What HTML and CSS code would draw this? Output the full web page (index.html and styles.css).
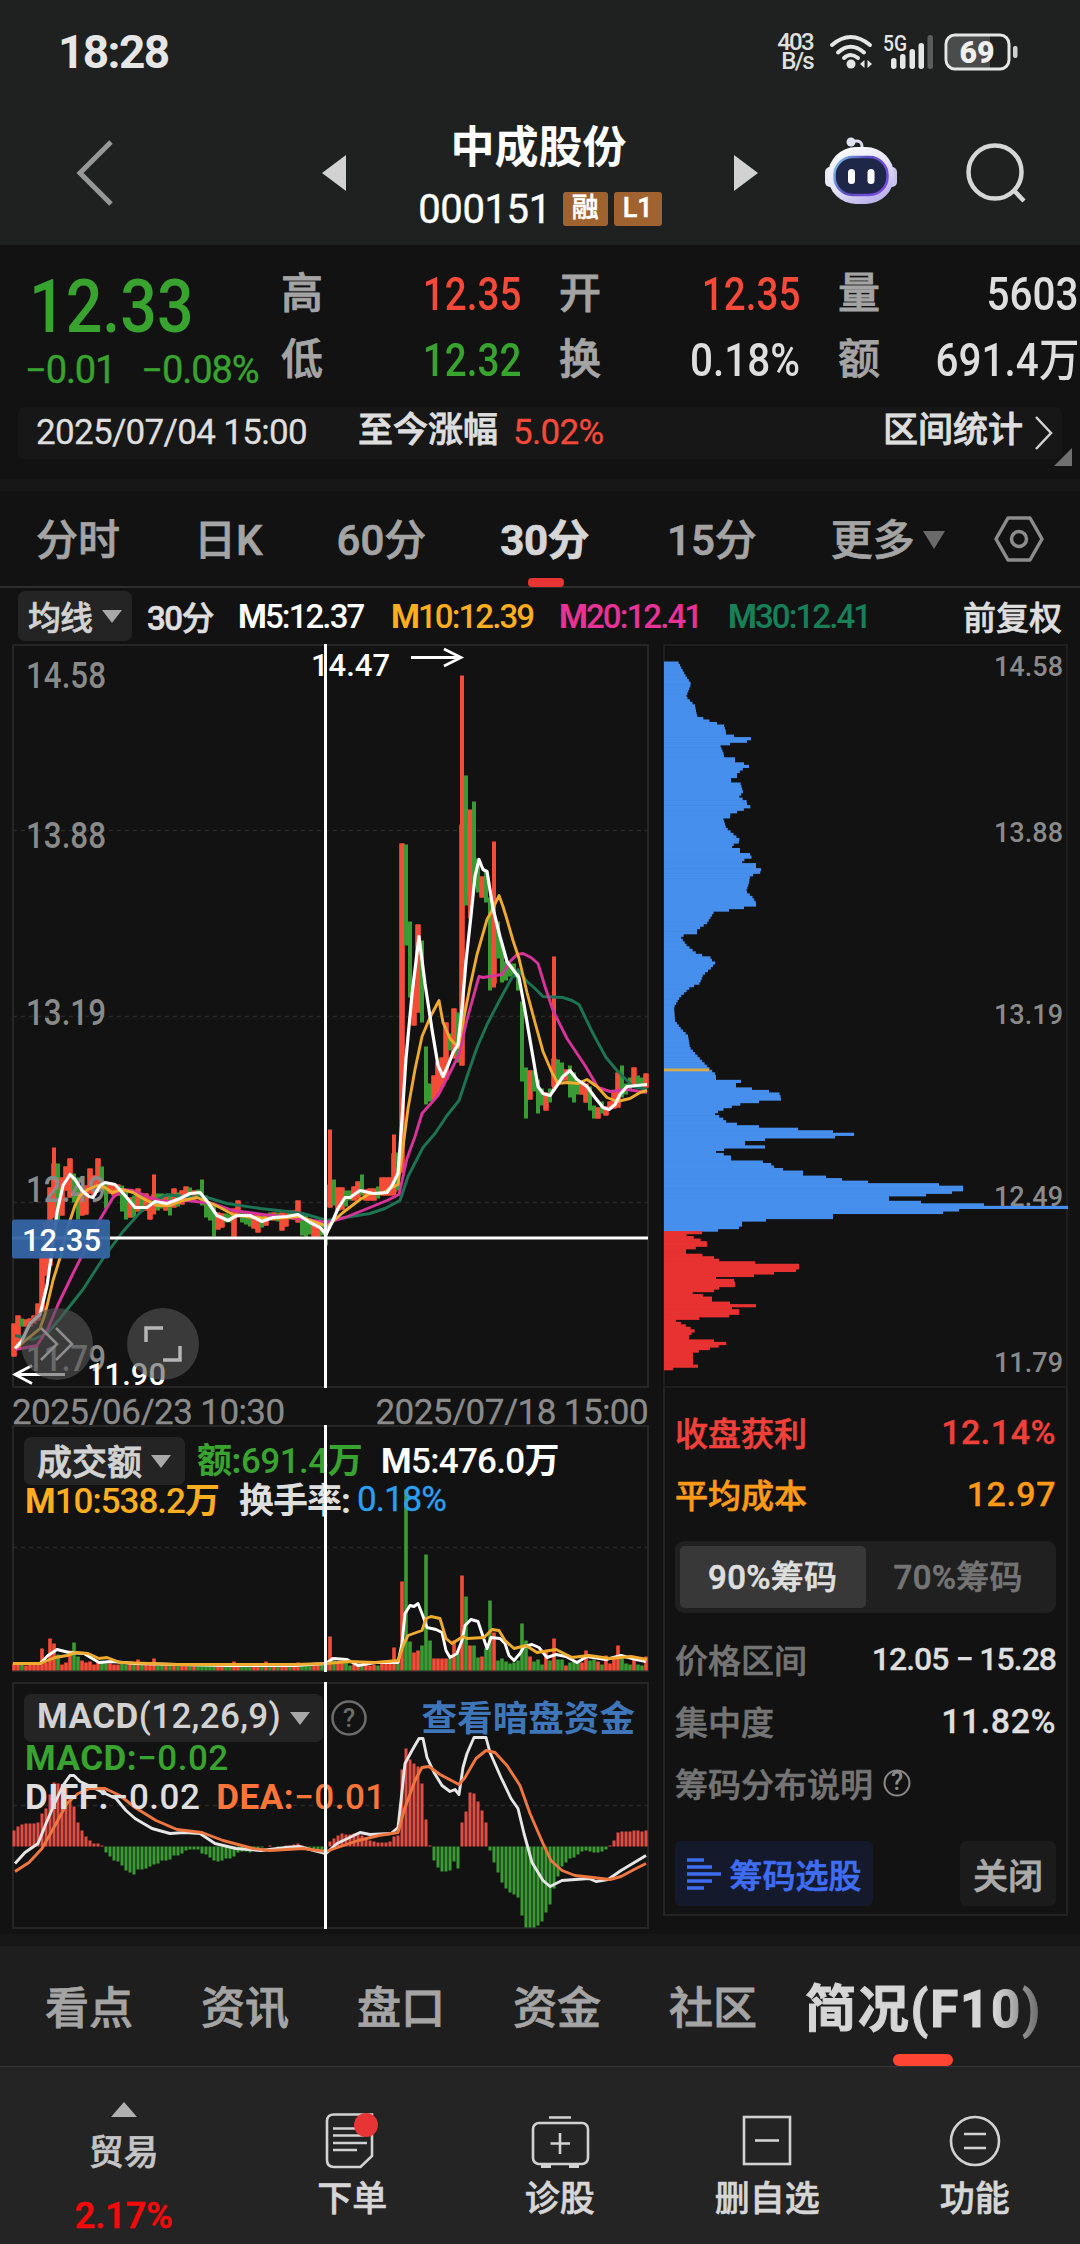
FILE: index.html
```
<!DOCTYPE html>
<html lang="zh-CN">
<head>
	<title>中成股份 000151</title>
	<meta http-equiv="content-type" content="text/html;charset=utf-8" />
	<link rel="stylesheet" href="styles.css">
</head>
<body>
	<div class="top">
		<div class="status">
			<span class="clock">18:28</span>
			<div class="status-right">
				<div class="speed"><p>403</p><p>B/s</p></div>
				<svg class="wifi" width="46" height="36" viewBox="0 0 46 36" fill="none" stroke="#e6e6e6" stroke-width="4" stroke-linecap="round">
					<path d="M3 11Q21.500 -5 41 11M9 18.500Q21.500 7 35 18.500M15 24Q21.500 18 29 24"/>
					<circle cx="22" cy="30" r="4.500" fill="#e6e6e6" stroke="none"/>
					<path d="M35.500 26v8l-4.500-4zM38.500 26v8l4.500-4z" fill="#e6e6e6" stroke="none"/>
				</svg>
				<svg class="signal" width="54" height="36" viewBox="0 0 54 36">
					<text x="0" y="17" class="sig-text" textLength="24" lengthAdjust="spacingAndGlyphs">5G</text>
					<g fill="#e6e6e6"><rect x="8" y="24" width="5.500" height="11" rx="2.700"/><rect x="17" y="20" width="5.500" height="15" rx="2.700"/><rect x="26.500" y="15" width="5.500" height="20" rx="2.700"/><rect x="35.500" y="9" width="5.500" height="26" rx="2.700"/></g>
					<rect x="44.500" y="1" width="5.500" height="34" rx="2.700" fill="#5c5c5c"/>
				</svg>
				<svg class="battery" width="76" height="38" viewBox="0 0 76 38">
					<path d="M12 3H46V35H12Q4 35 4 27V11Q4 3 12 3Z" fill="#4a4b4b"/>
					<rect x="2" y="2" width="63" height="34" rx="9" fill="none" stroke="#e6e6e6" stroke-width="3"/>
					<rect x="69" y="13" width="4.500" height="12" rx="2" fill="#cfcfcf"/>
					<text x="33" y="29.500" class="bat-text" text-anchor="middle" textLength="35" lengthAdjust="spacingAndGlyphs">69</text>
				</svg>
			</div>
		</div>
		<div class="nav">
			<svg width="40" height="66" viewBox="0 0 40 66" fill="none" stroke="#979797" stroke-width="5"><path d="M36 2L5 33L36 64"/></svg>
			<svg class="prev" width="24" height="36" viewBox="0 0 24 36"><path d="M24 0V36L0 18z" fill="#d2d2d2"/></svg>
			<div class="stock">
				<h1>中成股份</h1>
				<div class="code"><span class="code-num">000151</span><b class="tag">融</b><b class="tag">L1</b></div>
			</div>
			<svg class="next" width="24" height="36" viewBox="0 0 24 36"><path d="M0 0V36L24 18z" fill="#d2d2d2"/></svg>
			<svg class="robot" width="74" height="68" viewBox="0 0 74 68">
				<defs>
					<linearGradient id="head" x1="0" y1="0" x2=".6" y2="1"><stop offset="0" stop-color="#fff"/><stop offset=".6" stop-color="#e6e3f6"/><stop offset="1" stop-color="#bdb4ec"/></linearGradient>
					<linearGradient id="rim" x1="0" y1="0" x2="1" y2=".4"><stop offset="0" stop-color="#7fd0ee"/><stop offset=".5" stop-color="#5a4fc0"/><stop offset="1" stop-color="#7a4be0"/></linearGradient>
				</defs>
				<path d="M27 5Q39 1 38 12" fill="none" stroke="#dcdaf0" stroke-width="3"/>
				<circle cx="27" cy="5" r="4.500" fill="#dfe0f2"/>
				<rect x="1" y="30" width="12" height="20" rx="5" fill="#e8e7f6"/><rect x="61" y="30" width="12" height="20" rx="5" fill="#c9c3ee"/>
				<rect x="4" y="10" width="66" height="57" rx="28" fill="url(#head)"/>
				<rect x="10.500" y="20" width="53" height="38" rx="18" fill="#1e2748" stroke="url(#rim)" stroke-width="2.500"/>
				<rect x="24" y="32" width="7" height="15" rx="3.500" fill="#fff"/><rect x="43.500" y="32" width="7" height="15" rx="3.500" fill="#fff"/>
			</svg>
			<svg class="search" width="62" height="62" viewBox="0 0 62 62" fill="none" stroke="#d6d6d6" stroke-width="4.500"><circle cx="30" cy="30" r="26.500"/><path d="M48.500 48L59 59"/></svg>
		</div>
	</div>

	<div class="quote">
		<div class="price">
			<div class="now"><span>12.33</span></div>
			<div class="delta"><span>−0.01</span><span>−0.08%</span></div>
		</div>
		<div class="stats">
			<div class="stat"><label>高</label><span class="red">12.35</span></div>
			<div class="stat"><label>开</label><span class="red">12.35</span></div>
			<div class="stat"><label>量</label><span class="wide">5603</span></div>
			<div class="stat"><label>低</label><span class="green">12.32</span></div>
			<div class="stat"><label>换</label><span class="wide">0.18%</span></div>
			<div class="stat"><label>额</label><span class="wide">691.4万</span></div>
		</div>
	</div>
	<div class="strip">
		<span class="strip-date">2025/07/04 15:00</span>
		<span class="strip-label">至今涨幅</span>
		<span class="strip-pct red">5.02%</span>
		<span class="strip-more">区间统计</span>
		<svg width="20" height="36" viewBox="0 0 20 36" fill="none" stroke="#d2d2d2" stroke-width="2.500"><path d="M2 2L17 18L2 34"/></svg>
		<i class="corner"></i>
	</div>

	<div class="band"></div>
	<div class="tabs">
		<a>分时</a><a>日K</a><a>60分</a><a class="on">30分</a><a>15分</a><a>更多<i class="tri"></i></a>
		<svg width="50" height="46" viewBox="0 0 50 46" fill="none" stroke="#8c8c8c" stroke-width="3.500"><path d="M14 2H36L48 23L36 44H14L2 23z" stroke-linejoin="round"/><circle cx="25" cy="23" r="7.500"/></svg>
	</div>
	<div class="ma">
		<span class="pick">均线<i class="tri"></i></span>
		<span class="ma0">30分</span>
		<span class="ma5"><b>M</b>5:12.37</span>
		<span class="ma10"><b>M</b>10:12.39</span>
		<span class="ma20"><b>M</b>20:12.41</span>
		<span class="ma30"><b>M</b>30:12.41</span>
		<span class="fq">前复权</span>
	</div>

	<div class="main">
		<div class="left">
			<div class="kline">
				<svg id="kline" width="637" height="744" viewBox="12 643.500 637 744"></svg>
				<i class="cursor"></i>
				<span class="round r1"><svg width="36" height="36" viewBox="0 0 36 36" fill="none" stroke="#8d8d8d" stroke-width="2.500"><path d="M2 2L18 18L2 34M17 2L33 18L17 34"/></svg></span>
				<span class="round r2"><svg width="38" height="38" viewBox="0 0 38 38" fill="none" stroke="#b5b5b5" stroke-width="3.500"><path d="M2 17V3H19M36 21V35H19"/></svg></span>
			</div>
			<div class="dates"><span>2025/06/23 10:30</span><span>2025/07/18 15:00</span></div>
			<div class="volume">
				<svg id="volume" width="637" height="247" viewBox="12 1424.500 637 247"></svg>
				<div class="legend">
					<p><span class="pick">成交额<i class="tri"></i></span><span class="v1 green"><b>额:</b>691.4<b>万</b></span><span class="v2"><b>M</b>5:476.0<b>万</b></span></p>
					<p class="l2"><span class="v3"><b>M</b>10:538.2<b>万</b></span><span class="v4"><b>换手率:</b></span><span class="v5">0.18%</span></p>
				</div>
				<i class="cursor"></i>
			</div>
			<div class="macd">
				<svg id="macd" width="637" height="247" viewBox="12 1681.500 637 247"></svg>
				<div class="legend">
					<p><span class="pick"><b>MACD</b>(12,26,9)<i class="tri"></i></span>
						<svg class="help" width="36" height="36" viewBox="0 0 36 36"><circle cx="18" cy="18" r="16.500" fill="none" stroke="#6c6c6c" stroke-width="2.500"/><text x="18" y="27" text-anchor="middle">?</text></svg>
						<a class="dark">查看暗盘资金</a></p>
					<p class="m1 green"><b>MACD:</b>−0.02</p>
					<p class="m2"><span class="m2a"><b>DIFF:</b>−0.02</span><span class="orange"><b>DEA:</b>−0.01</span></p>
				</div>
				<i class="cursor"></i>
			</div>
		</div>
		<div class="right">
			<svg id="chips" width="405" height="744" viewBox="663 643.500 405 744"></svg>
			<div class="panel">
				<div class="row hot"><span>收盘获利</span><em>12.14%</em></div>
				<div class="row avg"><span>平均成本</span><em>12.97</em></div>
				<div class="seg"><span class="on">90%筹码</span><span>70%筹码</span></div>
				<div class="row"><span>价格区间</span><em class="range">12.05 − 15.28</em></div>
				<div class="row"><span>集中度</span><em>11.82%</em></div>
				<div class="row note"><span>筹码分布说明</span><svg class="help" width="28" height="28" viewBox="0 0 28 28"><circle cx="14" cy="14" r="12.500" fill="none" stroke="#8a8a8a" stroke-width="2"/><text x="14" y="21" text-anchor="middle">?</text></svg></div>
				<div class="btns">
					<a class="btn-chip"><svg width="34" height="32" viewBox="0 0 34 32" stroke="#3f6df2" stroke-width="3.600"><path d="M0 2H17M0 9H25M0 16H34M0 23H25M0 30H17"/></svg>筹码选股</a>
					<a class="btn-close">关闭</a>
				</div>
			</div>
		</div>
	</div>

	<div class="band band2"></div>
	<div class="pages">
		<a>看点</a><a>资讯</a><a>盘口</a><a>资金</a><a>社区</a><a class="on"><span>简况(F10)</span></a>
	</div>
	<div class="foot">
		<div class="item trade"><i class="up"></i><span>贸易</span><em>2.17%</em></div>
		<div class="item">
			<svg width="60" height="56" viewBox="0 0 60 56" fill="none" stroke="#d2d2d2" stroke-width="2.600"><path d="M12 1.500H50V43L38.500 54H12Q5 54 5 47V8Q5 1.500 12 1.500Z"/><path d="M11 15.500H40M11 22.500H42M11 30H45M11 37H35"/><circle cx="44" cy="12" r="12" fill="#e83434" stroke="none"/></svg>
			<span>下单</span>
		</div>
		<div class="item">
			<svg width="60" height="56" viewBox="0 0 60 56" fill="none" stroke="#d2d2d2" stroke-width="2.600"><path d="M19 4.500H41M30 20V41M20.500 30.500H40"/><rect x="3" y="10" width="55" height="41" rx="6"/><path d="M11 53H21M39 53H49" stroke-width="4"/></svg>
			<span>诊股</span>
		</div>
		<div class="item">
			<svg width="60" height="56" viewBox="0 0 60 56" fill="none" stroke="#d2d2d2" stroke-width="2.600"><rect x="7" y="4" width="46" height="47"/><path d="M18 27.500H42"/></svg>
			<span>删自选</span>
		</div>
		<div class="item">
			<svg width="60" height="56" viewBox="0 0 60 56" fill="none" stroke="#d2d2d2" stroke-width="2.600"><circle cx="30" cy="28" r="24"/><path d="M19 21H41M19 35H41"/></svg>
			<span>功能</span>
		</div>
	</div>
	<script type="text/javascript" src="chart.js"></script>
</body>
</html>
```
FILE: styles.css
```
*{padding:0;margin:0;box-sizing:border-box;}
body{width:1080px;height:2244px;background:#121212;color:#dedede;font-family:Roboto,"Noto Sans CJK SC",sans-serif;font-weight:500;overflow:hidden;}
svg{display:block;flex:none;overflow:visible;}
svg text{font-family:Roboto,"Noto Sans CJK SC",sans-serif;}
i,em{font-style:normal;}
span,a{white-space:nowrap;}

.red{color:#f5493a;}
.green{color:#38a32f;}
.orange{color:#fb7539;}

.tri{display:inline-block;border:10px solid transparent;border-top:13px solid #a8a8a8;border-bottom:0;}

/* header */
.top{height:245px;background:#1f2120;}
.status{height:104px;padding:0 60px 0 58px;display:flex;justify-content:space-between;align-items:center;}
.clock{font-size:46px;font-weight:700;color:#e6e6e6;line-height:104px;letter-spacing:-1.600px;}
.status-right{display:flex;align-items:center;height:38px;}
.speed{width:54px;font-size:24px;line-height:19px;font-weight:500;color:#e0e0e0;letter-spacing:-1.700px;padding-right:16px;text-align:right;}
.signal{margin:0 7px 0 8px;}
.sig-text{font-size:22px;font-weight:500;fill:#e6e6e6;}
.bat-text{font-size:32px;font-weight:900;fill:#f0f0f0;}
.nav{height:141px;display:flex;padding:0 53px 3px 75px;align-items:center;}
.prev{margin-left:207px;}
.stock{width:389px;text-align:center;padding-top:10px;}
.next{margin-left:3px;}
.stock h1{font-size:44px;line-height:60px;color:#fff;font-weight:700;}
.code{display:flex;justify-content:center;align-items:center;gap:6px;height:60px;padding-top:2px;margin-left:3px;}
.code-num{font-size:40px;color:#fff;font-weight:400;letter-spacing:-.400px;margin-right:6px;-webkit-text-stroke:.4px;}
.tag{height:34px;line-height:33px;padding:0 9px;border-radius:3px;background:#a0622f;color:#fff;font-size:27px;font-weight:500;-webkit-text-stroke:.5px;}
.robot{margin-left:66px;margin-top:-5px;}
.search{margin-left:67px;}

/* quote */
.quote{display:flex;height:162px;padding-top:18px;}
.price{width:281px;padding-left:25px;color:#38a32f;}
.now{height:84px;line-height:86px;font-size:75px;}
.now span{display:inline-block;transform:scaleX(.86);transform-origin:4px 0;padding-left:4px;}
.delta{display:flex;gap:26px;font-size:38px;line-height:46px;font-weight:400;-webkit-text-stroke:.4px;}
.delta span{letter-spacing:-1.100px;}
.stats{flex:1;display:grid;grid-template-columns:240px 241px 241px;column-gap:38px;grid-auto-rows:66px;}
.stat{display:flex;justify-content:space-between;line-height:62px;}
.stat label{font-size:42px;color:#a4a4a4;-webkit-text-stroke:.8px;}
.stat span{font-size:46px;transform:scaleX(.84);transform-origin:100% 0;}
.stat .wide{transform:scaleX(.88);}
.strip{position:relative;display:flex;align-items:center;margin:0 18px;height:52px;padding:0 8px 0 18px;background:#171717;border-radius:6px;font-size:35px;line-height:50px;}
.strip span{height:50px;}
.strip-date{width:322px;font-weight:400;letter-spacing:-.7px;-webkit-text-stroke:.3px;}
.strip-label{width:155px;-webkit-text-stroke:.8px;}
.strip-label,.strip-more{margin-top:-5px;}
.strip-pct{font-weight:400;letter-spacing:-.700px;-webkit-text-stroke:.3px;}
.strip-more{margin-left:auto;margin-right:11px;-webkit-text-stroke:.8px;}
.corner{position:absolute;right:-10px;bottom:-7px;border-left:18px solid transparent;border-bottom:18px solid #707070;}
.band{height:12px;margin-top:20px;background:#171717;}

/* period tabs */
.tabs{display:flex;align-items:center;height:97px;padding:0 0 4px 36px;border-bottom:2px solid #2e2e2e;font-size:42px;color:#a4a4a4;-webkit-text-stroke:.7px;}
.tabs a{position:relative;}
.tabs a + a{margin-left:74px;}
.tabs .on{font-weight:700;color:#d6d6d6;letter-spacing:-.500px;}
.tabs .on + a{margin-left:78px;}
.tabs .on:after{content:"";position:absolute;left:28px;bottom:-20px;width:36px;height:9px;border-radius:4px;background:#e83434;}
.tabs .tri{border-width:18px 11px 0;border-top-color:#6a6a6a;margin-left:8px;vertical-align:6px;}
.tabs svg{margin-left:49px;margin-top:5px;}

.pick{display:flex;align-items:center;background:#242424;border-radius:7px;color:#d2d2d2;}
.ma{display:flex;align-items:center;height:56px;padding:0 18px;font-size:33px;letter-spacing:-1px;}
.ma .pick{width:114px;height:50px;padding-left:10px;-webkit-text-stroke:.6px;}
.ma .tri{margin-left:10px;}
.ma0{margin-left:15px;width:91px;letter-spacing:-1.500px;}
.ma0,.fq{-webkit-text-stroke:.6px;}
.ma5,.ma10,.ma20,.ma30{letter-spacing:-1.900px;}
.ma5{width:153px;color:#fff;}
.ma10{width:168px;color:#fcae1e;}
.ma20{width:169px;color:#e83298;}
.ma30{color:#178059;}
.fq{margin-left:auto;letter-spacing:0;}

/* charts */
.main{display:flex;gap:14px;padding:0 12px;height:1271px;}
.left{width:637px;}
.kline,.volume,.macd{position:relative;}
.cursor{position:absolute;left:312px;top:0;bottom:0;width:3px;background:#fff;}
.round{position:absolute;top:664px;width:72px;height:72px;border-radius:50%;background:rgba(85,85,85,.6);display:flex;align-items:center;justify-content:center;}
.r1{left:9px;}
.r2{left:115px;}
.dates{display:flex;justify-content:space-between;height:37px;padding-right:1px;line-height:50px;font-size:35px;font-weight:400;color:#8a8a8a;letter-spacing:-.600px;-webkit-text-stroke:.3px;}
.volume{height:247px;margin-bottom:10px;}
.legend{position:absolute;left:0;right:0;top:12px;padding:0 14px 0 12px;font-size:35px;}
.legend p{display:flex;align-items:center;height:48px;}
.legend .pick{height:48px;padding:0 14px 3px 13px;}
.volume .pick{-webkit-text-stroke:.8px;letter-spacing:0;}
.legend .tri{margin-left:9px;position:relative;top:2px;}
.legend .l2{height:32px;padding-left:1px;}
.legend span{letter-spacing:-1px;}
.v1,.v2,.v3,.v4{margin-top:-8px;}
.v1{margin-left:12px;width:184px;}
.volume .v1{letter-spacing:-.500px;}
.volume .v2{color:#fff;letter-spacing:-.700px;}
.v3{color:#fcae1e;width:214px;}
.v4{width:118px;}
.v5{margin-top:-4px;color:#2b9ff0;font-weight:400;-webkit-text-stroke:.3px;}
.help text{font-size:25px;font-weight:500;fill:#8a8a8a;}
.macd .help{margin-left:8px;}
.macd .help text{fill:#6c6c6c;}
.macd .pick{width:299px;letter-spacing:.300px;}
.macd .pick b{letter-spacing:.500px;}
.dark{margin-left:auto;margin-top:-6px;color:#3f76ba;font-weight:700;font-size:35.600px;}
.legend .m1{height:32px;padding-left:1px;letter-spacing:.500px;}
.legend .m2{height:47px;padding-left:1px;gap:16px;}
.legend .m2 span{letter-spacing:.500px;}

.k-axis{fill:#8a8a8a;font-size:36px;font-weight:500;}
.c-axis{fill:#8a8a8a;font-size:28px;font-weight:500;}
.k-mark{fill:#fff;font-size:32px;font-weight:500;}

/* chip panel */
.right{width:405px;}
.panel{height:528px;border:2px solid #232323;border-top:0;padding:13px 10px 0 10px;font-size:33px;}
.row{display:flex;align-items:center;justify-content:space-between;height:62px;color:#747474;-webkit-text-stroke:.6px;}
.row em{color:#dedede;font-size:34px;letter-spacing:.500px;-webkit-text-stroke:.3px;}
.row .range{font-size:32px;letter-spacing:-1px;}
.hot span,.hot em{color:#f0403a;}
.avg span,.avg em{color:#fb9a18;}
.note{justify-content:flex-start;gap:10px;}
.note text{-webkit-text-stroke:0;}
.seg{display:flex;height:72px;margin:16px 0 15px;padding:5px;background:#202020;border-radius:9px;color:#747474;-webkit-text-stroke:.6px;}
.seg span{flex:1;text-align:center;line-height:63px;border-radius:5px;letter-spacing:.300px;}
.seg .on{background:#383838;color:#dedede;}
.btns{display:flex;justify-content:space-between;margin-top:27px;-webkit-text-stroke:.7px;}
.btns a{height:65px;border-radius:6px;display:flex;align-items:center;justify-content:center;}
.btn-chip{width:198px;gap:9px;background:#141a2b;color:#3f6df2;}
.btn-close{width:96px;background:#1b1b1b;color:#aaa;font-size:35px;}

/* bottom */
.band2{margin-top:19px;}
.pages{display:flex;align-items:center;height:121px;padding:0 0 3px 45px;background:#1e1e1e;border-bottom:1px solid #363636;font-size:44px;color:#a4a4a4;-webkit-text-stroke:.8px;}
.pages a{width:156px;}
.pages .on{position:relative;width:auto;margin-left:-20px;font-size:51px;font-weight:700;}
.pages .on span{display:block;letter-spacing:1.800px;background:linear-gradient(90deg,#d6d6d6 80%,#666);-webkit-background-clip:text;color:transparent;-webkit-text-stroke:1px transparent;}
.pages .on:after{content:"";position:absolute;left:88px;bottom:-24px;width:60px;height:12px;border-radius:6px;background:#ff4532;}
.foot{display:flex;height:177px;background:#242424;padding-left:20px;}
.item{width:207.500px;padding-top:46px;text-align:center;font-size:35px;line-height:50px;color:#d6d6d6;-webkit-text-stroke:.6px;}
.item svg{margin:0 auto 6px;}
.item span{display:block;}
.trade{margin-right:21px;padding-top:35px;color:#c4c4c4;}
.up{display:block;width:0;margin:0 auto 12px;border:13px solid transparent;border-bottom:15px solid #b0b0b0;border-top:0;}
.trade em{display:block;margin-top:12px;color:#f50a0a;font-size:36px;}
```
FILE: chart.js
```
var NS = 'http://www.w3.org/2000/svg';
var RED = '#f54c38', GREEN = '#3a9a33';
var X0 = 14, STEP = 4;

function add(svg, name, attrs, text){
	var el = document.createElementNS(NS, name);
	for (var k in attrs) {
		el.setAttribute(k, attrs[k]);
	}
	if (text) {
		el.textContent = text;
	}
	svg.appendChild(el);
}
function line(svg, pts, color, w){
	add(svg, 'polyline', {points: pts, fill: 'none', stroke: color, 'stroke-width': w || 2.9, 'stroke-linejoin': 'round'});
}
function frame(svg, y, h, grids){
	add(svg, 'rect', {x: 13, y: y, width: 635, height: h, fill: 'none', stroke: '#262626', 'stroke-width': 2});
	grids.forEach(function(g){
		add(svg, 'path', {d: 'M13 ' + g + 'H648', stroke: '#2a2a2a', 'stroke-width': 1.5, 'stroke-dasharray': '4 4'});
	});
}
function label(svg, cls, x, y, w, text){
	add(svg, 'text', {'class': cls, x: x, y: y, textLength: w, lengthAdjust: 'spacingAndGlyphs'}, text);
}

// colour, high, low, [body top, body bottom]
var candles = ('r1323-1356 r1315-1348 g1318-1326 r1319-1326 r1318-1326 r1315-1323 r1303-1320 r1253-1311 r1222-1275 r1187-1265 ' +
'r1147-1217-1163-1217 g1163-1222 r1177-1215 r1166-1190 r1158-1197 g1173-1202 g1177-1219 r1188-1215 r1185-1214 r1168-1193 ' +
'r1175-1195 r1158-1185 g1166-1185 g1182-1208 r1182-1193 r1184-1195 r1184-1195 g1185-1211 g1190-1219 r1197-1217 ' +
'g1195-1217 r1188-1211 g1193-1211 r1193-1210 r1197-1219 r1174-1214-1194-1205 g1193-1210 g1193-1208 r1196-1210 g1195-1215 ' +
'r1188-1207 g1192-1206 r1190-1204 r1186-1200 g1187-1198 r1190-1199 g1189-1198 g1179-1205 g1195-1217 g1205-1220 ' +
'g1205-1236 r1212-1229 r1213-1227 g1213-1222 g1214-1222 r1208-1236 r1200-1217 g1212-1222 g1211-1224 g1213-1226 ' +
'r1214-1228 r1214-1232 g1216-1227 r1214-1225 g1212-1220 r1212-1220 g1212-1221 r1212-1230 r1213-1226 g1210-1219 ' +
'r1210-1219 r1200-1222 g1213-1235 g1215-1236 g1218-1234 r1221-1236 r1221-1236 g1222-1235 g1229-1245 r1129-1207-1184-1207 ' +
'g1179-1205 r1187-1210 r1187-1209 g1190-1206 g1190-1200 r1186-1200 r1181-1198 g1174-1195 r1189-1200 r1188-1200 ' +
'r1188-1200 g1186-1198 r1177-1195 r1177-1195 r1177-1195 r1134-1195-1153-1192 g1152-1190 r843-1172 g844-945 g921-997 ' +
'r983-1025 r924-1012 g940-1022 g1046-1104 g1083-1101 r1075-1099 r1061-1093 r1057-1086 r1022-1079 g1033-1050 ' +
'r1008-1058 g1012-1062 r675-1065-824-1065 g775-905-793-860 r809-918-824-895 g801-886-836-886 g858-892 r876-897 g870-902 g897-990 ' +
'r841-987-944-983 g921-958 g943-982 g961-980 g963-976 g963-977 g970-990 g1001-1081 g1067-1118 r1070-1099 ' +
'g1070-1091 g1079-1113 g1088-1105 r1092-1110 g1088-1102 r956-1090-1058-1086 g1059-1083 g1062-1081 r1069-1080 g1065-1097 ' +
'g1072-1102 g1081-1094 r1081-1094 r1083-1102 g1086-1110 g1105-1118 r1107-1118 g1101-1113 r1106-1115 r1101-1109 ' +
'r1091-1108 r1072-1107 g1065-1097 g1083-1094 g1077-1090 r1067-1086 g1075-1086 g1077-1086 r1073-1087').split(' ');

var kline = document.getElementById('kline');
frame(kline, 644.5, 742, [830, 1016, 1202]);
candles.forEach(function(c, i){
	var p = c.slice(1).split('-'), color = c.charAt(0) == 'r' ? RED : GREEN;
	var x = X0 + i * STEP, top = p[2] || p[0], bottom = p[3] || p[1];
	add(kline, 'rect', {x: x - 2, y: p[0], width: 4, height: p[1] - p[0], fill: color});
	if (color == RED) {
		add(kline, 'rect', {x: x - 2.8, y: top, width: 5.6, height: bottom - top, fill: color});
	}
});
[[687, '14.58'], [847, '13.88'], [1024, '13.19'], [1201, '12.49'], [1370, '11.79']].forEach(function(t){
	label(kline, 'k-axis', 26, t[0], 80, t[1]);
});
line(kline, '15,1335 33,1339 47,1333 60,1318 83,1289 103,1258 123,1231 140,1212 153,1201 167,1194 183,1196 207,1197 227,1203 260,1208 287,1211 303,1213 320,1218 327,1220 345,1217 370,1213 385,1208 400,1200 408,1176 423,1147 435,1133 447,1115 459,1100 467,1076 477,1047 487,1024 500,999 512,977 518,969 527,981 535,988 543,996 563,997 572,1000 579,1004 593,1033 606,1057 617,1070 633,1086 647,1089', '#1c7454');
line(kline, '15,1349 37,1345 48,1328 58,1304 72,1275 83,1253 100,1219 113,1197 123,1189 133,1190 150,1197 163,1201 187,1200 213,1203 233,1210 263,1214 290,1217 313,1220 327,1222 345,1217 370,1207 387,1200 399,1194 407,1158 415,1136 422,1113 438,1095 450,1072 459,1054 467,1019 479,976 483,977 502,974 510,961 517,954 523,953 531,957 538,963 545,986 553,1010 567,1038 585,1065 598,1087 610,1091 627,1089 647,1092', '#d8339a');
line(kline, '17,1347 28,1338 40,1328 45,1314 53,1280 62,1251 68,1226 75,1205 80,1195 88,1189 97,1185 105,1187 112,1192 122,1189 133,1192 143,1198 157,1205 170,1205 183,1200 197,1197 207,1201 220,1207 233,1214 253,1217 273,1218 300,1216 317,1222 327,1226 343,1212 360,1199 370,1193 382,1193 390,1188 398,1184 403,1147 408,1108 415,1069 422,1036 430,1017 439,1000 443,1022 450,1038 458,1047 463,1022 470,986 477,954 487,919 492,910 499,895 503,906 507,919 513,940 519,958 527,992 535,1022 543,1051 552,1072 558,1083 567,1082 578,1083 587,1079 597,1086 607,1097 617,1101 630,1098 640,1092 647,1090', '#efab2e');
line(kline, '15,1348 22,1340 30,1323 40,1314 47,1285 52,1251 57,1212 63,1185 70,1174 75,1179 82,1190 89,1196 93,1197 100,1185 105,1182 115,1184 125,1195 135,1207 147,1207 155,1201 167,1203 180,1198 190,1193 200,1192 208,1202 217,1215 228,1220 237,1215 250,1215 262,1221 273,1217 287,1216 298,1214 310,1222 320,1227 326,1234 332,1222 338,1208 345,1197 350,1197 360,1190 373,1193 387,1192 392,1185 398,1173 402,1119 406,1058 412,994 419,936 425,983 432,1029 438,1065 443,1076 448,1065 453,1052 458,1044 462,1008 466,961 471,915 475,876 479,859 483,869 487,871 493,908 500,936 507,961 513,969 519,977 524,1004 532,1051 538,1086 543,1093 550,1095 557,1085 563,1076 570,1070 577,1079 587,1086 595,1097 603,1107 609,1109 615,1104 620,1094 627,1086 637,1085 647,1084', '#fff', 3.2);
// selected price
add(kline, 'rect', {x: 12, y: 1236, width: 636, height: 3, fill: '#fff'});
add(kline, 'rect', {x: 12, y: 1219, width: 98, height: 39, rx: 3, fill: '#3566a5', 'fill-opacity': .95});
label(kline, 'k-mark', 22, 1250, 79, '12.35');
label(kline, 'k-mark', 311, 675, 79, '14.47');
label(kline, 'k-mark', 87, 1384, 79, '11.90');
add(kline, 'path', {d: 'M411 657H461M444 648.5L461 657L444 665.500M65 1374H15M32 1365L15 1374L32 1383', fill: 'none', stroke: '#fff', 'stroke-width': 2.8});

var vols = [7,6,7,5,7,6,8,22,8,32,27,16,6,8,20,28,14,10,8,9,6,9,8,7,7,6,6,7,6,7,6,11,6,7,6,12,5,6,5,7,6,5,6,5,5,6,5,5,6,5,5,5,4,5,6,9,5,4,5,4,5,4,5,9,5,4,5,4,5,5,6,8,5,5,6,5,6,6,8,34,10,8,9,10,5,6,7,5,6,5,6,5,8,8,9,23,11,89,181,29,18,20,25,116,30,12,12,12,12,12,30,20,95,74,25,25,13,14,22,70,38,10,12,9,7,8,10,47,30,14,9,11,6,20,10,32,11,11,5,8,9,9,8,20,10,11,9,6,15,7,14,25,12,7,6,11,6,5,14];
var volume = document.getElementById('volume');
frame(volume, 1425.5, 245, [1547]);
vols.forEach(function(v, i){
	add(volume, 'rect', {x: X0 + i * STEP - 1.8, y: 1670 - v, width: 3.6, height: v, fill: candles[i].charAt(0) == 'r' ? RED : GREEN});
});
line(volume, '13,1663 40,1663 48,1655 57,1649 69,1652 84,1653 99,1662 112,1661 135,1663 177,1664 227,1665 295,1665 326,1663 333,1658 347,1659 358,1665 375,1662 398,1662 402,1643 405,1613 410,1605 414,1606 418,1603 422,1613 427,1627 436,1629 442,1632 446,1650 450,1657 457,1653 462,1640 465,1625 471,1619 478,1621 482,1633 487,1648 491,1637 500,1638 505,1643 509,1655 514,1660 520,1653 524,1646 532,1644 539,1647 547,1657 556,1654 566,1656 577,1662 587,1656 606,1659 621,1655 636,1659 646,1661', '#fff');
line(volume, '13,1663 40,1663 55,1657 67,1655 76,1652 88,1653 99,1658 107,1657 120,1662 177,1664 227,1664 295,1664 326,1663 349,1661 375,1662 398,1660 404,1643 408,1635 422,1630 426,1618 431,1616 440,1618 446,1638 452,1643 463,1636 467,1638 484,1637 492,1629 499,1630 505,1640 514,1648 526,1645 537,1652 556,1649 572,1657 589,1655 610,1658 631,1656 647,1659', '#efab2e');

var hist = [16,20,22,23,23,23,24,33,38,52,64,63,62,60,50,40,24,16,10,6,3,3,1,-6,-10,-14,-15,-19,-24,-26,-28,-23,-23,-22,-20,-18,-17,-14,-14,-13,-9,-9,-7,-4,-3,-3,-3,-7,-8,-11,-14,-15,-14,-12,-12,-10,-6,-5,-5,-6,-4,-3,-1,0,1,0,-1,0,1,1,2,3,1,-1,-1,-3,-4,-4,-6,5,8,11,13,12,12,13,14,11,8,6,5,4,4,4,5,10,11,77,98,87,83,80,63,27,1,-14,-21,-25,-25,-24,-15,-22,24,35,54,53,45,36,24,-4,-16,-26,-36,-42,-46,-48,-51,-69,-81,-81,-81,-79,-75,-66,-58,-42,-30,-20,-16,-12,-11,-8,-5,-4,-5,-6,-6,-5,-3,1,6,14,15,15,15,16,16,15,16];
var macd = document.getElementById('macd');
frame(macd, 1682.5, 245, [1805]);
hist.forEach(function(v, i){
	add(macd, 'rect', {x: X0 + i * STEP - 1.5, y: v > 0 ? 1846 - v : 1846, width: 3, height: Math.abs(v), fill: v > 0 ? '#e14d43' : GREEN});
});
line(macd, '15,1863 25,1852 38,1843 46,1823 55,1802 63,1785 70,1775 74,1775 80,1781 93,1787 103,1792 116,1798 126,1810 135,1818 152,1828 170,1833 185,1832 200,1833 215,1843 236,1848 261,1850 286,1847 299,1846 314,1850 326,1853 337,1843 360,1832 370,1834 391,1833 398,1827 401,1800 405,1763 412,1750 419,1738 423,1738 427,1757 434,1772 442,1785 450,1791 455,1789 459,1794 463,1767 467,1753 474,1737 486,1737 490,1752 501,1777 511,1798 518,1808 524,1833 532,1862 543,1880 550,1886 562,1880 589,1878 596,1881 608,1879 621,1870 631,1864 646,1855', '#e6e6e6');
line(macd, '15,1871 29,1862 42,1848 55,1825 67,1803 78,1793 90,1788 105,1788 120,1795 135,1807 156,1820 177,1829 202,1832 223,1840 253,1848 270,1850 303,1848 326,1851 358,1840 379,1835 398,1832 404,1810 415,1780 422,1767 429,1766 440,1774 459,1784 465,1777 476,1758 486,1750 495,1752 507,1765 520,1785 530,1813 543,1843 551,1860 562,1870 575,1875 593,1877 610,1879 621,1876 636,1868 646,1863', '#f0763f');

// chip distribution: y, width of the row
var dist = [661,14,674,21,683,27,696,22,705,31,715,33,720,45,725,60,731,62,733.5,70,736,87,738.5,83,742,66,744,56,754,60,757,71,761,80,763.6,85,767,80,773,73,777,67,781,76,791,79,796,75,801,83,804,91,808.7,79,813.5,66,817,59,827,62,834,70,840,77,844.5,68,848,76,852,86,855,91,859.6,78,863,92,867,97,870,100,875,86,882,85,890.6,82,897,89,902,92,904.6,80,907.5,65,911,50,922,43,929,33,932,22,937,17,945,23,953,33,957.5,48,961,52,967,47,974,39,982,36,986.6,26,996,16,1006,10,1020,11,1028,17,1035,24,1047,26,1057,35,1066.5,44,1074,52,1078,65,1080,77,1082.5,72,1086,88,1089,105,1092,115,1097,117,1099.5,95,1103,77,1108,60,1112.6,50,1120,62,1122,73,1124.7,95,1127,134,1130,169,1133,190,1135,171,1138,101,1140.7,81,1144,101,1148,60,1150.4,50,1156,67,1160,95,1164.5,110,1168,119,1170.7,139,1174.6,162,1178,178,1180.4,204,1183,275,1186,299,1189,288,1191.6,262,1194,247,1196.4,225,1199,198,1200.8,257,1203,320,1206,404,1208.6,295,1211,279,1214,169,1217,112,1219,102,1221.6,78,1225,75,1227,46,1229,54,1230,38,1234,22,1238.6,35,1243.5,47,1249,22,1253,32,1258,55,1261,91,1264,135,1267.7,132,1270,110,1272.5,90,1276.4,52,1279,70,1282,71,1285.6,55,1289.5,50,1292,28,1297,48,1300.6,66,1304.5,92,1307,68,1309,75,1313,65,1316,35,1319.5,11,1324,20,1329.7,31,1334.6,25,1338,50,1342,64,1346.7,50,1351.5,29,1360,29,1363,34,1367,9,1369,9];
var chips = document.getElementById('chips');
add(chips, 'path', {d: 'M664 1387V644.500H1067V1387M664 1386.500H1067', fill: 'none', stroke: '#232323', 'stroke-width': 1.5});
[[675, '14.58'], [841, '13.88'], [1023, '13.19'], [1205, '12.49'], [1371, '11.79']].forEach(function(t){
	label(chips, 'c-axis', 994, t[0], 69, t[1]);
});
var n = 0;
for (var y = 661; y < 1369; y += 2.52) {
	while (n < dist.length - 4 && dist[n + 2] < y + 1.2) {
		n += 2;
	}
	var y0 = dist[n], y1 = dist[n + 2], w = dist[n + 1];
	if (y1 - y0 > 4) {
		w += (dist[n + 3] - w) * Math.max(0, Math.min(1, (y + 1.2 - y0) / (y1 - y0)));
	}
	add(chips, 'rect', {x: 664, y: y, width: w, height: 3.2, fill: y < 1229 ? '#468fec' : '#e83232'});
}
add(chips, 'rect', {x: 664, y: 1068, width: 45, height: 2.8, fill: '#d9ab4f'});
```
